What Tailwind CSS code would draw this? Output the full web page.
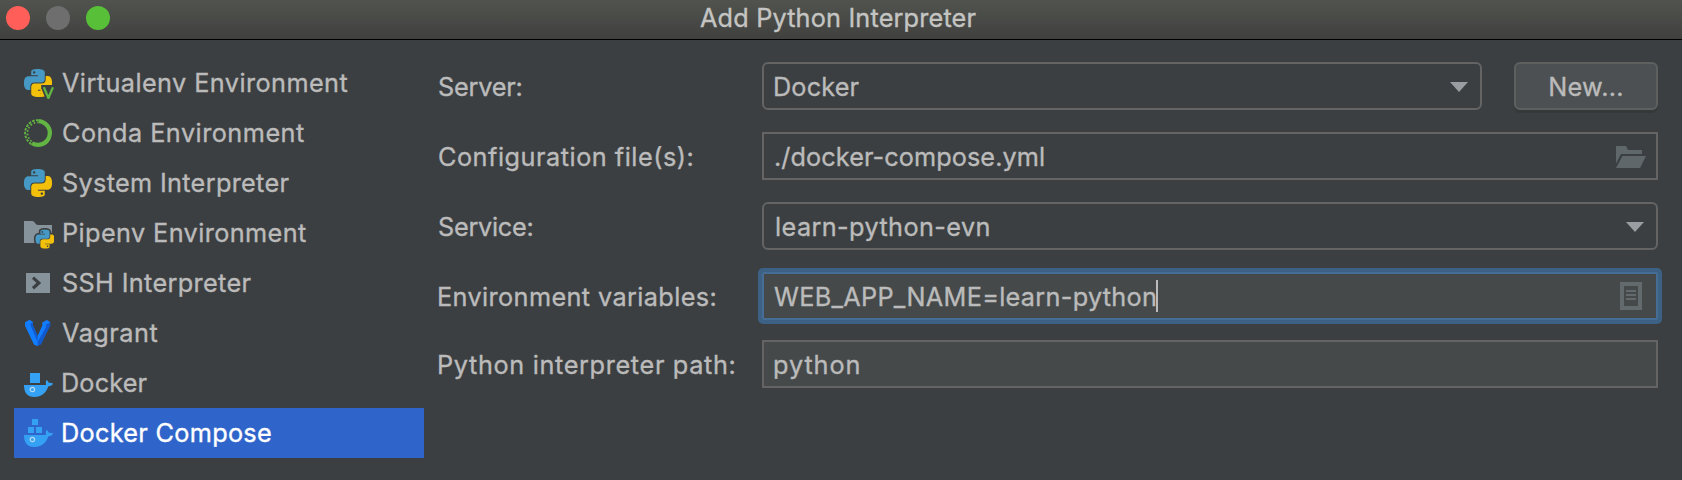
<!DOCTYPE html>
<html lang="en">
<head>
<meta charset="utf-8">
<title>Add Python Interpreter</title>
<script src="https://cdn.jsdelivr.net/npm/@tailwindcss/browser@4"></script>
</head>
<body class="w-[1682px] h-[480px] overflow-hidden bg-[#3c3f41] text-[#bbbbbb] font-['Inter','Liberation_Sans',sans-serif] text-[25.25px] leading-[30px] whitespace-nowrap [-webkit-text-stroke:0.35px_currentColor]">

<!-- Shared icon shapes -->
<svg class="hidden">
  <defs>
    <g id="py-blue"><path fill="#4699c4" d="M14.25.18l.9.2.73.26.59.3.45.32.34.34.25.34.16.33.1.3.04.26.02.2-.01.13V8.5l-.05.63-.13.55-.21.46-.26.38-.3.31-.33.25-.35.19-.35.14-.33.1-.3.07-.26.04-.21.02H8.77l-.69.05-.59.14-.5.22-.41.27-.33.32-.27.35-.2.36-.15.37-.1.35-.07.32-.04.27-.02.21v3.06H3.17l-.21-.03-.28-.07-.32-.12-.35-.18-.36-.26-.36-.36-.35-.46-.32-.59-.28-.73-.21-.88-.14-1.05-.05-1.23.06-1.22.16-1.04.24-.87.32-.71.36-.57.4-.44.42-.33.42-.24.4-.16.36-.1.32-.05.24-.01h.16l.06.01h8.16v-.83H6.18l-.01-2.75-.02-.37.05-.34.11-.31.17-.28.25-.26.31-.23.38-.2.44-.18.51-.15.58-.12.64-.1.71-.06.77-.04.84-.02 1.27.05zm-6.3 1.98l-.23.33-.08.41.08.41.23.34.33.22.41.09.41-.09.33-.22.23-.34.08-.41-.08-.41-.23-.33-.33-.22-.41-.09-.41.09z"/></g>
    <g id="py-yellow"><path fill="#f2bf0a" d="M21.04 6.11l.28.06.32.12.35.18.36.27.36.35.35.47.32.59.28.73.21.88.14 1.04.05 1.23-.06 1.23-.16 1.04-.24.86-.32.71-.36.57-.4.45-.42.33-.42.24-.4.16-.36.09-.32.05-.24.02-.16-.01h-8.22v.82h5.84l.01 2.76.02.36-.05.34-.11.31-.17.29-.25.25-.31.24-.38.2-.44.17-.51.15-.58.13-.64.09-.71.07-.77.04-.84.01-1.27-.04-1.07-.14-.9-.2-.73-.25-.59-.3-.45-.33-.34-.34-.25-.34-.16-.33-.1-.3-.04-.25-.02-.2.01-.13v-5.34l.05-.64.13-.54.21-.46.26-.38.3-.32.33-.24.35-.2.35-.14.33-.1.3-.06.26-.04.21-.02.13-.01h5.84l.69-.05.59-.14.5-.21.41-.28.33-.32.27-.35.2-.36.15-.36.1-.35.07-.32.04-.28.02-.21V6.07h2.09l.14.01zm-6.47 14.25l-.23.33-.08.41.08.41.23.33.33.23.41.08.41-.08.33-.23.23-.33.08-.41-.08-.41-.23-.33-.33-.23-.41-.08-.41.08z"/></g>
    <g id="whale">
      <path fill="#35a1f4" d="M2 18H24.2C23.8 16.8 23.6 14.6 24.4 12.9C25.8 13.6 26.6 14.8 26.9 16C28.1 15.7 29.8 15.9 31 16.6C30.3 18.4 28.4 19.4 26.4 19.3C24.2 25.8 19.6 30 12.4 30C5.4 30 2 25.8 2 18Z"/>
      <circle cx="10.4" cy="22.5" r="2.2" fill="none" stroke="#b5d9f5" stroke-width="1.2"/>
    </g>
  </defs>
</svg>

<header class="flex h-10 items-start border-b border-black bg-linear-to-b from-[#51534f] to-[#40413e]">
  <div class="flex gap-4 pl-1.5 pt-1.5">
    <span class="size-6 rounded-full bg-[#ff5f58]"></span>
    <span class="size-6 rounded-full bg-[#6d6e6d]"></span>
    <span class="size-6 rounded-full bg-[#57c038]"></span>
  </div>
  <h1 class="ml-[590px] pt-[3px] tracking-[0.175px] text-[#c4c5c3]">Add Python Interpreter</h1>
</header>

<main class="flex">
  <ul class="mt-[18px] ml-3.5 w-[410px] shrink-0">
    <li class="flex h-[50px] items-center gap-2 pl-2">
      <svg class="size-8" viewBox="0 0 32 32">
        <g transform="translate(2 2) scale(1.1667)"><use href="#py-blue"/><use href="#py-yellow"/></g>
        <path fill="#3c3f41" d="M19.2 18H32V32H19.2Z"/>
        <path fill="#f2bf0a" d="M18.5 22H19.6L22.6 29.4L19.5 29.9H18.5Z"/>
        <path fill="none" stroke="#62b543" stroke-width="2.3" d="M21.8 20.2L26.4 31L31 20.2"/>
      </svg>
      <span class="tracking-[0.43px]">Virtualenv Environment</span>
    </li>
    <li class="flex h-[50px] items-center gap-2 pl-2">
      <svg class="size-8" viewBox="0 0 32 32" fill="none" stroke="#62b543">
        <path stroke-width="4.2" d="M16.5 4.1A11.9 11.9 0 1 1 10 26.3"/>
        <path stroke-width="1.9" stroke-dasharray="2.6 1.3" d="M9.3 27A12.9 12.9 0 0 1 16.5 3.1"/>
        <path stroke-width="1.7" stroke-dasharray="1.7 1.9" d="M9.6 24.4A10.6 10.6 0 0 1 16.5 5.4"/>
      </svg>
      <span class="tracking-[0.489px]">Conda Environment</span>
    </li>
    <li class="flex h-[50px] items-center gap-2 pl-2">
      <svg class="size-8" viewBox="0 0 32 32">
        <g transform="translate(2 2) scale(1.1667)"><use href="#py-blue"/><use href="#py-yellow"/></g>
      </svg>
      <span class="tracking-[0.323px]">System Interpreter</span>
    </li>
    <li class="flex h-[50px] items-center gap-2 pl-2">
      <svg class="size-8" viewBox="0 0 32 32">
        <path fill="#87939a" d="M2 4H10.5C12.5 4 13.5 8 16 8H30V26H2Z"/>
        <g transform="translate(13.5 12.6) scale(.79)">
          <g stroke="#3c3f41" stroke-width="4" stroke-linejoin="round"><use href="#py-blue"/><use href="#py-yellow"/></g>
          <use href="#py-blue"/><use href="#py-yellow"/>
        </g>
      </svg>
      <span class="tracking-[0.40px]">Pipenv Environment</span>
    </li>
    <li class="flex h-[50px] items-center gap-2 pl-2">
      <svg class="size-8" viewBox="0 0 32 32">
        <path fill="#87939a" d="M4 6H28V26H4Z"/>
        <path fill="none" stroke="#3c3f41" stroke-width="3.2" d="M11 10.6L16.8 15.9L11 21.2"/>
      </svg>
      <span class="tracking-[0.350px]">SSH Interpreter</span>
    </li>
    <li class="flex h-[50px] items-center gap-2 pl-2">
      <svg class="size-8" viewBox="0 0 32 32">
        <path fill="#127eff" d="M3 5.5L7.6 3L11 5.2V8.4L15.6 19V29L12.2 27.4L3 8.6Z"/>
        <path fill="#1159cf" d="M7.4 5.6L11 5.2V8.4L15.6 19.2L20.4 8.4V5.6L28.4 5.5V8.6L19 27.4L15.6 29L14.8 23.6Z"/>
        <path fill="#127eff" d="M3 5.5L7.6 3L11 5.2L7.4 7.4L15.6 25V29L12.2 27.4L3 8.6ZM20.4 5.4L24.8 3L28.4 5.2L24 7.6V10L15.6 25V19.2L20.4 8.4Z"/>
      </svg>
      <span class="tracking-[0.5px]">Vagrant</span>
    </li>
    <li class="flex h-[50px] items-center gap-2 pl-2">
      <svg class="size-8" viewBox="0 0 32 32">
        <path fill="#35a1f4" d="M8 6H18V16H8Z"/>
        <use href="#whale"/>
      </svg>
      <span class="-ml-px tracking-[0.140px]">Docker</span>
    </li>
    <li class="flex h-[50px] items-center gap-2 bg-[#2f65ca] pl-2 text-white">
      <svg class="size-8" viewBox="0 0 32 32">
        <path fill="#35a1f4" d="M10 2H16V8H10ZM6 10H12V16H6ZM14 10H20V16H14Z"/>
        <use href="#whale"/>
      </svg>
      <span class="-ml-px tracking-[0.305px]">Docker Compose</span>
    </li>
  </ul>

  <form class="mt-[22px] ml-[14px] flex w-[1220px] flex-col gap-[22px]">
    <div class="flex h-12 items-center">
      <label class="w-[324px] shrink-0 pt-0.5 tracking-[-0.208px]">Server:</label>
      <div class="flex h-12 w-[720px] items-center justify-between rounded-md border-2 border-[#646464] pr-3 pl-[9px]">
        <span class="pt-0.5 tracking-[0.140px]">Docker</span>
        <svg class="mt-0.5 h-2.5 w-[18px]" viewBox="0 0 18 10"><path fill="#9a9da1" d="M0 0H18L9 10Z"/></svg>
      </div>
      <button type="button" class="ml-8 flex h-12 w-36 items-center justify-center rounded-md border-2 border-[#5e6060] bg-[#4c5052] shadow-[0_3px_0_#36393a]">
        <span class="pt-0.5 tracking-[0.272px]">New...</span>
      </button>
    </div>
    <div class="flex h-12 items-center">
      <label class="w-[324px] shrink-0 pt-0.5 tracking-[0.517px]">Configuration file(s):</label>
      <div class="flex h-12 w-[896px] items-center justify-between border-2 border-[#646464] pr-2.5 pl-2.5">
        <span class="pt-0.5 tracking-[0.082px]">./docker-compose.yml</span>
        <svg class="mt-0.5 h-[22px] w-[30px]" viewBox="0 0 30 22"><path fill="#5f676a" d="M0 0H10L12 4H26V8H5L0 17.5ZM6.5 10H30L24 22H0Z"/></svg>
      </div>
    </div>
    <div class="flex h-12 items-center">
      <label class="w-[324px] shrink-0 pt-0.5 tracking-[-0.253px]">Service:</label>
      <div class="flex h-12 w-[896px] items-center justify-between rounded-md border-2 border-[#646464] pr-3 pl-[11px]">
        <span class="pt-0.5 tracking-[0.400px]">learn-python-evn</span>
        <svg class="mt-0.5 h-2.5 w-[18px]" viewBox="0 0 18 10"><path fill="#9a9da1" d="M0 0H18L9 10Z"/></svg>
      </div>
    </div>
    <div class="flex h-12 items-center">
      <label class="-ml-px w-[325px] shrink-0 pt-0.5 tracking-[0.388px]">Environment variables:</label>
      <div class="flex h-12 w-[896px] items-center rounded-[1px] border-2 border-[#466d94] bg-[#45494a] pr-3.5 pl-2.5 outline-4 outline-[#3d6185]">
        <span class="pt-0.5 tracking-[0.299px]">WEB_APP_NAME=learn-python</span>
        <span class="-ml-px h-8 w-0.5 bg-[#bbbbbb]"></span>
        <svg class="ml-auto h-7 w-[22px]" viewBox="0 0 22 28"><path fill="#636a6d" fill-rule="evenodd" d="M0 0H22V28H0ZM4 4V24H18V4ZM6 8H16V10H6ZM6 12H16V14H6ZM6 16H16V18H6Z"/></svg>
      </div>
    </div>
    <div class="-mt-0.5 flex h-12 items-center">
      <label class="-ml-px w-[325px] shrink-0 pt-0.5 tracking-[0.657px]">Python interpreter path:</label>
      <div class="flex h-12 w-[896px] items-center border-2 border-[#646464] bg-[#45494a] pl-[9px]">
        <span class="pt-0.5 tracking-[0.928px]">python</span>
      </div>
    </div>
  </form>
</main>
</body>
</html>
